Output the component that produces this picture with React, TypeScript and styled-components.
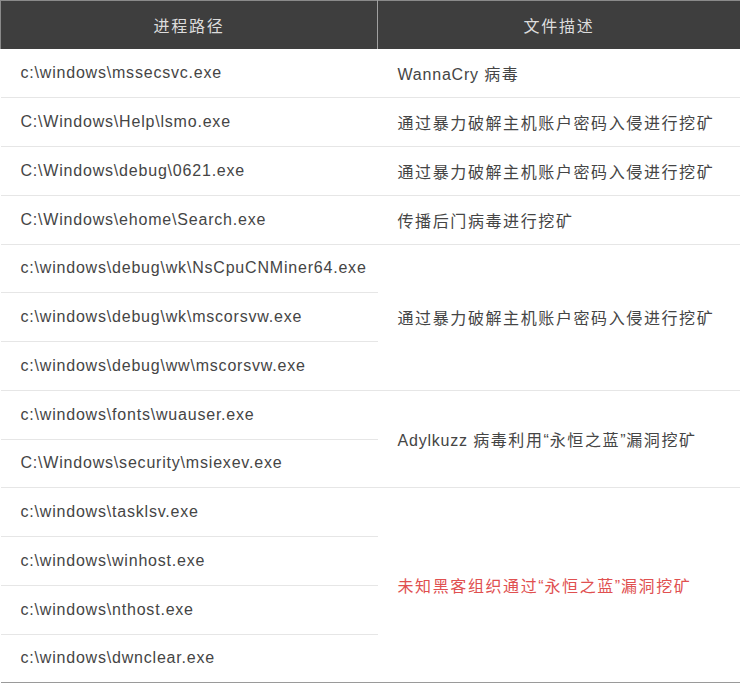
import React from "react";
import styled, { createGlobalStyle } from "styled-components";

const GlobalStyle = createGlobalStyle`
  body {
    margin: 0;
    background: #ffffff;
    font-family: "Liberation Sans", "Noto Sans CJK SC", sans-serif;
  }
`;

const StTable = styled.table`
  width: 740px;
  border-collapse: collapse;
  table-layout: fixed;
  font-size: 16px;
  letter-spacing: 0.8px;
  color: #454545;
  border-bottom: 2px solid #9a9a9a;
`;

const StHeadCell = styled.th`
  height: 48px;
  padding: 0;
  background-color: #3e3e3e;
  color: #dcdcdc;
  font-weight: normal;
  font-size: 16px;
  letter-spacing: 1.75px;
  text-align: center;
  border-top: 1px solid #8a8a8a;
  border-left: 1px solid #8a8a8a;
  border-right: 1px solid #2a2a2a;
  &:first-child {
    border-right: 1px solid #a0a0a0;
  }
`;

const StRow = styled.tr`
  height: 48.75px;
`;

const StCell = styled.td<{ $danger?: boolean }>`
  padding: 0 0 0 20px;
  vertical-align: middle;
  white-space: nowrap;
  border-bottom: 1px solid #e6e6e6;
  color: ${({ $danger }) => ($danger ? "#e05050" : "#454545")};
`;

// chinese glyphs sit a bit wider in the source image
const StCjk = styled.span`
  letter-spacing: 1.6px;
`;

const withCjk = (text: string) =>
  text.split(/([\u4e00-\u9fff]+)/).map((part, i) =>
    /[\u4e00-\u9fff]/.test(part) ? <StCjk key={i}>{part}</StCjk> : part
  );

interface IGroup {
  desc: string;
  danger?: boolean;
  paths: string[];
}

const groups: IGroup[] = [
  { desc: "WannaCry 病毒", paths: ["c:\\windows\\mssecsvc.exe"] },
  { desc: "通过暴力破解主机账户密码入侵进行挖矿", paths: ["C:\\Windows\\Help\\lsmo.exe"] },
  { desc: "通过暴力破解主机账户密码入侵进行挖矿", paths: ["C:\\Windows\\debug\\0621.exe"] },
  { desc: "传播后门病毒进行挖矿", paths: ["C:\\Windows\\ehome\\Search.exe"] },
  {
    desc: "通过暴力破解主机账户密码入侵进行挖矿",
    paths: [
      "c:\\windows\\debug\\wk\\NsCpuCNMiner64.exe",
      "c:\\windows\\debug\\wk\\mscorsvw.exe",
      "c:\\windows\\debug\\ww\\mscorsvw.exe",
    ],
  },
  {
    desc: "Adylkuzz 病毒利用“永恒之蓝”漏洞挖矿",
    paths: ["c:\\windows\\fonts\\wuauser.exe", "C:\\Windows\\security\\msiexev.exe"],
  },
  {
    desc: "未知黑客组织通过“永恒之蓝”漏洞挖矿",
    danger: true,
    paths: [
      "c:\\windows\\tasklsv.exe",
      "c:\\windows\\winhost.exe",
      "c:\\windows\\nthost.exe",
      "c:\\windows\\dwnclear.exe",
    ],
  },
];

const App = () => {
  return (
    <>
      <GlobalStyle />
      <StTable>
        <colgroup>
          <col style={{ width: 377 }} />
          <col style={{ width: 363 }} />
        </colgroup>
        <thead>
          <tr>
            <StHeadCell>进程路径</StHeadCell>
            <StHeadCell>文件描述</StHeadCell>
          </tr>
        </thead>
        <tbody>
          {groups.map((group, gi) =>
            group.paths.map((path, pi) => (
              <StRow key={`${gi}-${pi}`}>
                <StCell>{path}</StCell>
                {pi === 0 && (
                  <StCell rowSpan={group.paths.length} $danger={group.danger}>
                    {withCjk(group.desc)}
                  </StCell>
                )}
              </StRow>
            ))
          )}
        </tbody>
      </StTable>
    </>
  );
};

export default App;
